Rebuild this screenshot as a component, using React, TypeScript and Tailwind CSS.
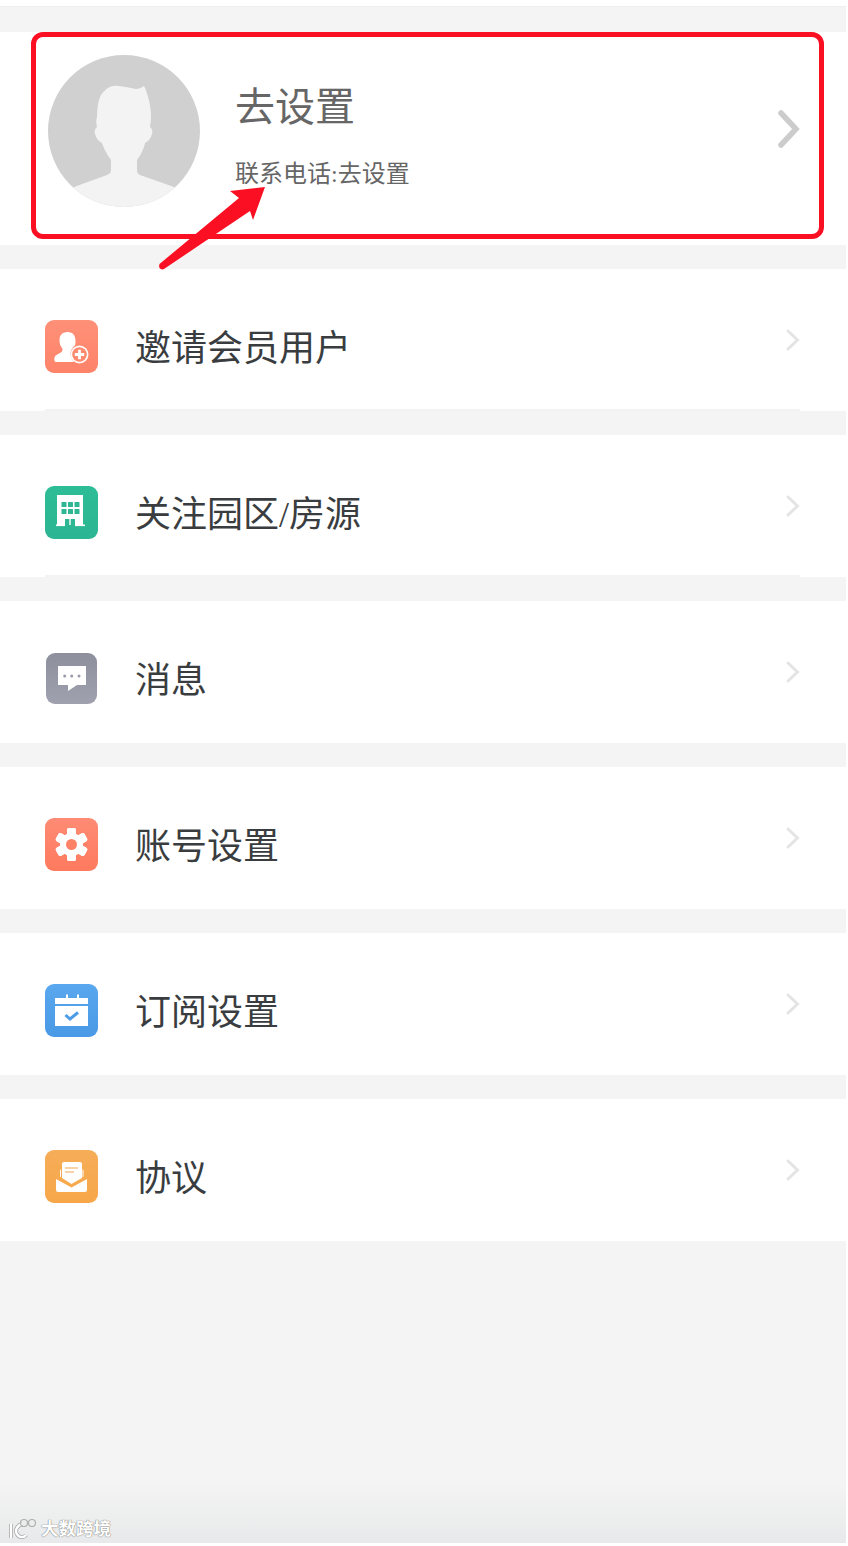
import React from "react";

const FONT = "font-['Liberation_Serif','Noto_Sans_CJK_SC',sans-serif]";

function Chevron({ big }: { big?: boolean }) {
  return big ? (
    <svg width="24" height="38" viewBox="0 0 24 38" fill="none" className="block">
      <path d="M4 3 L19 19 L4 35" stroke="#cccccc" strokeWidth="5.5" strokeLinecap="round" strokeLinejoin="miter" />
    </svg>
  ) : (
    <svg width="16" height="24" viewBox="0 0 16 24" fill="none" className="block">
      <path d="M3 3 L12.500 12 L3 21" stroke="#e4e4e4" strokeWidth="3" strokeLinecap="round" />
    </svg>
  );
}

function IconInvite() {
  return (
    <svg viewBox="0 0 53 53" className="w-full h-full">
      <path d="M22.500 12c-5.500 0-8 3.500-8 8.500 0 3 1 5.500 2.500 7.500 .8 1.200 .6 3-.5 4-2 1.700-6 2.500-7 5.500-.5 1.600-.2 4.500 1.500 4.500h18c-2-2-3.500-5-3.500-8 0-3.500 1.700-6.500 4.500-8.500 .3-1 .6-2.500 .5-5-.2-5-2.500-8.500-8-8.500z" fill="#fff" />
      <circle cx="34.500" cy="34.500" r="9" fill="#fff" />
      <circle cx="34.500" cy="34.500" r="7.300" fill="#fe8a70" />
      <path d="M34.500 29.800v9.400M29.800 34.500h9.400" stroke="#fff" strokeWidth="2.800" />
    </svg>
  );
}

function IconBuilding() {
  const cells = [0, 1, 2];
  return (
    <svg viewBox="0 0 53 53" className="w-full h-full">
      <path d="M12 9h26v30H12z" fill="#fff" />
      {[16, 23].map((y) =>
        cells.map((i) => <rect key={`${y}-${i}`} x={16.500 + i * 6.500} y={y} width="5" height="5" rx=".6" fill="#2fb793" />)
      )}
      <path d="M12 34h26v4.500H12z" fill="#fff" />
      <path d="M20 33h10v6H20z" fill="#2fb793" />
      <path d="M24.300 33h1.400v6h-1.400z" fill="#fff" />
      <rect x="11" y="38.500" width="9" height="1.600" fill="#fff" />
      <rect x="30" y="38.500" width="10" height="1.600" fill="#fff" />
    </svg>
  );
}

function IconMessage() {
  return (
    <svg viewBox="0 0 51 51" className="w-full h-full">
      <path d="M12.500 13h27a.5 .5 0 0 1 .5 .5v18a.5 .5 0 0 1-.5 .5H31l-9 6v-6h-9.500a.5 .5 0 0 1-.5-.5v-18a.5 .5 0 0 1 .5-.5z" fill="#fff" />
      <circle cx="18.700" cy="23" r="1.500" fill="#9a9ba8" />
      <circle cx="25.700" cy="23" r="1.500" fill="#9a9ba8" />
      <circle cx="33" cy="23" r="1.500" fill="#9a9ba8" />
    </svg>
  );
}

function IconGear() {
  const teeth = [0, 60, 120, 180, 240, 300];
  return (
    <svg viewBox="0 0 53 53" className="w-full h-full">
      {teeth.map((a) => (
        <rect key={a} x="22" y="10" width="9" height="33" rx="2" fill="#fff" transform={`rotate(${a} 26.500 26.500)`} />
      ))}
      <circle cx="26.500" cy="26.500" r="11.500" fill="#fff" />
      <circle cx="26.500" cy="26.500" r="5.500" fill="#fe8268" />
    </svg>
  );
}

function IconCalendar() {
  return (
    <svg viewBox="0 0 53 53" className="w-full h-full">
      <path d="M10 14h33v6H10z" fill="#fff" />
      <path d="M21 10.500h2v4h-2zM32 10.500h2v4h-2z" fill="#fff" />
      <path d="M10 22h33v20H10z" fill="#fff" />
      <path d="M20.500 31l4.500 4 8-6.500" fill="none" stroke="#4d9ce8" strokeWidth="3" />
    </svg>
  );
}

function IconMail() {
  return (
    <svg viewBox="0 0 53 53" className="w-full h-full">
      <path d="M17 14a2 2 0 0 1 2-2h16a2 2 0 0 1 2 2v14l-10.500 6L17 28z" fill="#fff" />
      <path d="M20 18h13M20 22h9" stroke="#f8c48a" strokeWidth="1.600" />
      <path d="M15 20.500v6l1 .7v-8c-.6 .2-1 .6-1 1.300zM38.500 20.500v6l-1 .7v-8c.6 .2 1 .6 1 1.300z" fill="#fff" />
      <path d="M11 29l15.500 8.500L42 29v11a2 2 0 0 1-2 2H13a2 2 0 0 1-2-2z" fill="#fff" />
    </svg>
  );
}

const rows = [
  { title: "邀请会员用户", bg: "bg-gradient-to-b from-[#fe9078] to-[#fe8369]", icon: <IconInvite />, divider: true, msg: false },
  { title: "关注园区/房源", bg: "bg-gradient-to-b from-[#2dbd96] to-[#2cb592]", icon: <IconBuilding />, divider: true, msg: false },
  { title: "消息", bg: "bg-gradient-to-b from-[#8e8f9d] to-[#a0a1ae]", icon: <IconMessage />, divider: false, msg: true },
  { title: "账号设置", bg: "bg-gradient-to-b from-[#fe8b74] to-[#fe7a5e]", icon: <IconGear />, divider: false, msg: false },
  { title: "订阅设置", bg: "bg-gradient-to-b from-[#59a7ee] to-[#4a99e6]", icon: <IconCalendar />, divider: false, msg: false },
  { title: "协议", bg: "bg-gradient-to-b from-[#f6ad58] to-[#f7a748]", icon: <IconMail />, divider: false, msg: false },
];

function Row({ r }: { r: (typeof rows)[number] }) {
  return (
    <div className="relative h-[142px] bg-white mb-[24px] flex">
      <div
        className={
          r.msg
            ? `w-[51px] h-[51px] ml-[46px] mr-[1px] mt-[52px] rounded-[9px] overflow-hidden shrink-0 ${r.bg}`
            : `w-[53px] h-[53px] ml-[45px] mt-[51px] rounded-[9px] overflow-hidden shrink-0 ${r.bg}`
        }
      >
        {r.icon}
      </div>
      <div className="ml-[37px] mt-[52px] h-[56px] leading-[56px] text-[36px] text-[#3a3d40] whitespace-nowrap">{r.title}</div>
      <div className="ml-auto mr-[45px] self-start mt-[59px]">
        <Chevron />
      </div>
      {r.divider && <div className="absolute left-[45px] right-[46px] bottom-0 h-[2px] bg-[#f3f3f3]" />}
    </div>
  );
}

export default function App() {
  return (
    <div className={`relative w-[848px] h-[1546px] bg-white overflow-hidden ${FONT}`}>
      <div className="w-[846px] h-[1543px] bg-[#f4f4f4] flex flex-col relative">
        <div className="h-[7px] bg-white border-b border-[#eeeeee] shrink-0" />
        <div className="h-[25px] shrink-0" />
        <div className="h-[213px] bg-white flex items-start shrink-0 mb-[24px]">
          <div className="relative w-[152px] h-[152px] ml-[48px] mt-[23px] shrink-0 rounded-full overflow-hidden bg-[#d0d0d0]">
            <svg viewBox="0 0 152 152" className="absolute inset-0 w-full h-full">
              <path
                d="M65 31C72 30 80 33 88 34C91 34 93 33 96 31C98 35 99 38 100 42C102 48 103 56 103 62C103 67 102 70 102 72C104 74 105 76 104 79C103 83 101 86 97 88C96 94 92 101 89 105L89 115C89 118 90 119 92 120L126 132L126 152L26 152L26 132L59 120C62 119 63 117 63 115L63 105C60 101 56 94 54 88C50 86 48 83 47 79C46 76 47 74 49 72C48 68 48 65 49 62C49 54 50 47 52 42C55 36 60 32 65 31Z"
                fill="#f3f3f3"
              />
            </svg>
          </div>
          <div className="ml-[35px] flex flex-col">
            <div className="mt-[46px] h-[60px] leading-[60px] text-[40px] text-[#666666] whitespace-nowrap">去设置</div>
            <div className="mt-[18px] h-[36px] leading-[36px] text-[24px] text-[#666666] whitespace-nowrap">联系电话:去设置</div>
          </div>
          <div className="ml-auto mr-[45px] mt-[78px]">
            <Chevron big />
          </div>
        </div>
        {rows.map((r) => (
          <Row key={r.title} r={r} />
        ))}
        <div className="absolute left-0 right-0 bottom-0 h-[60px] bg-gradient-to-b from-[#f4f4f4] to-[#e8e9ea]" />
        <div className="absolute left-[8px] bottom-[2px] flex items-center gap-[3px]">
          <svg width="30" height="24" viewBox="0 0 30 24" fill="none" className="block">
            <path d="M3 7v14M14 7c-6 2-7 7-5 10 2 4 7 4 9 1" stroke="#a8a8a8" strokeWidth="4" />
            <path d="M3 7v14M14 7c-6 2-7 7-5 10 2 4 7 4 9 1" stroke="#ffffff" strokeWidth="2.400" />
            <circle cx="16" cy="6" r="3.500" stroke="#b0b0b0" strokeWidth="1.200" />
            <circle cx="24" cy="6" r="3.500" stroke="#b0b0b0" strokeWidth="1.200" />
          </svg>
          <span className="text-[17.500px] leading-[20px] text-white font-bold [text-shadow:0_0_1px_#777777,0_0_1px_#777777] whitespace-nowrap">大数跨境</span>
        </div>
      </div>
      <div className="absolute left-[31px] top-[32px] w-[793px] h-[207px] border-[5px] border-[#fb1023] rounded-[12px]" />
      <svg width="848" height="300" viewBox="0 0 848 300" className="absolute left-0 top-0 pointer-events-none">
        <path d="M265 187 L230 191 L239 198 L159.500 264 Q158.500 267 160 268.500 Q162 270 164 269 L250 211 L253 220 Z" fill="#fb1023" />
      </svg>
    </div>
  );
}
